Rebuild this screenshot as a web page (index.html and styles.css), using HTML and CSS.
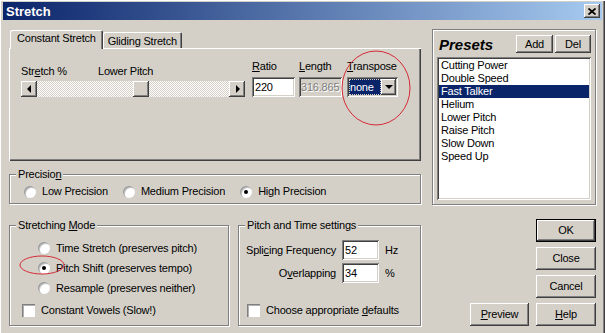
FILE: index.html
```html
<!DOCTYPE html>
<html lang="en">
<head>
  <meta charset="UTF-8" />
  <title>Stretch</title>
  <link rel="stylesheet" href="styles.css">
</head>
<body>

  <div class="window">
    <div class="titlebar">
      <span>Stretch</span>
      <div class="close-btn">
        <svg width="8" height="7" viewBox="0 0 8 7"><path d="M0.5 0.5l7 6M7.5 0.5l-7 6" stroke="#000" stroke-width="1.7" fill="none"/></svg>
      </div>
    </div>

    <div class="main">
      <div class="left">
        <div class="tabs">
          <div class="tab active">Constant Stretch</div>
          <div class="tab">Gliding Stretch</div>
        </div>

        <div class="tab-panel">
          <div class="stretch-row">
            <div class="slider-col">
              <div class="slider-labels">
                <span class="lbl-stretch">Str<u>e</u>tch %</span>
                <span>Lower Pitch</span>
              </div>
              <div class="scrollbar">
                <div class="sb-btn"><i class="arrow-left"></i></div>
                <div class="sb-track"><div class="sb-thumb"></div></div>
                <div class="sb-btn"><i class="arrow-right"></i></div>
              </div>
            </div>

            <div class="field ratio">
              <label><u>R</u>atio</label>
              <div class="textbox">220</div>
            </div>
            <div class="field length">
              <label><u>L</u>ength</label>
              <div class="textbox disabled">316.865</div>
            </div>
            <div class="field transpose">
              <label><u>T</u>ranspose</label>
              <div class="combo">
                <span class="combo-value">none</span>
                <div class="combo-btn"><i class="arrow-down"></i></div>
              </div>
            </div>
          </div>
        </div>

        <div class="group precision">
          <div class="legend"><span>Precisio<u>n</u></span></div>
          <div class="radio-row">
            <div class="option"><i class="radio"></i><span>Low Precision</span></div>
            <div class="option"><i class="radio"></i><span>Medium Precision</span></div>
            <div class="option"><i class="radio on"></i><span>High Precision</span></div>
          </div>
        </div>

        <div class="bottom-row">
          <div class="group mode">
            <div class="legend"><span>Stretching <u>M</u>ode</span></div>
            <div class="mode-list">
              <div class="option"><i class="radio"></i><span>Time Stretch (preserves pitch)</span></div>
              <div class="option"><i class="radio on"></i><span>Pitch Shift (preserves tempo)</span></div>
              <div class="option"><i class="radio"></i><span>Resample (preserves neither)</span></div>
            </div>
            <div class="option check-row"><i class="checkbox"></i><span>Constant Vowels (Slow!)</span></div>
          </div>

          <div class="group pitch-time">
            <div class="legend"><span>Pitch and Time settings</span></div>
            <div class="settings-grid">
              <span class="set-label">Spli<u>c</u>ing Frequency</span>
              <div class="textbox">52</div>
              <span>Hz</span>
              <span class="set-label">O<u>v</u>erlapping</span>
              <div class="textbox">34</div>
              <span>%</span>
            </div>
            <div class="option check-row"><i class="checkbox"></i><span>Choose appropriate <u>d</u>efaults</span></div>
          </div>
        </div>
      </div>

      <div class="right">
        <div class="presets">
          <div class="presets-head">
            <span class="presets-title">Presets</span>
            <div class="btn small add">Add</div>
            <div class="btn small del">Del</div>
          </div>
          <div class="listbox">
            <div class="item">Cutting Power</div>
            <div class="item">Double Speed</div>
            <div class="item selected">Fast Talker</div>
            <div class="item">Helium</div>
            <div class="item">Lower Pitch</div>
            <div class="item">Raise Pitch</div>
            <div class="item">Slow Down</div>
            <div class="item">Speed Up</div>
          </div>
        </div>

        <div class="actions">
          <div class="btn default">OK</div>
          <div class="btn">Close</div>
          <div class="btn">Cancel</div>
          <div class="last-row">
            <div class="btn"><span><u>P</u>review</span></div>
            <div class="btn"><span><u>H</u>elp</span></div>
          </div>
        </div>
      </div>
    </div>

    <!-- red marks drawn over the dialog -->
    <svg class="marks" width="605" height="333">
      <ellipse cx="376" cy="88" rx="34" ry="37" />
      <ellipse cx="42" cy="265" rx="22" ry="9" />
    </svg>
  </div>

</body>
</html>
```

FILE: styles.css
```css
* {
  box-sizing: border-box;
}

body {
  margin: 0;
  background: #d4d0c8;
  font-family: 'Liberation Sans', Arial, sans-serif;
  font-size: 11px;
  letter-spacing: -0.2px;
  line-height: 13px;
  color: #000;
}

u {
  text-decoration-thickness: 1px;
  text-underline-offset: 1px;
}

.window {
  position: relative;
  width: 605px;
  height: 333px;
  overflow: hidden;
  padding: 2px 3px 0 3px;
  background: #d4d0c8;
  box-shadow: inset 1px 1px #fff, inset -1px 0 #404040, inset -2px 0 #808080;
}

.titlebar {
  height: 18px;
  display: flex;
  align-items: center;
  justify-content: space-between;
  padding: 0 2px 0 3px;
  background: linear-gradient(to right, #0a246a, #a6caf0);
  color: #fff;
  font-weight: bold;
  font-size: 13px;
  letter-spacing: 0;
}

.close-btn {
  width: 16px;
  height: 14px;
  display: flex;
  align-items: center;
  justify-content: center;
  background: #d4d0c8;
  box-shadow: inset -1px -1px #404040, inset 1px 1px #fff, inset -2px -2px #808080;
}

.main {
  display: flex;
  padding-left: 6px;
}

.left {
  width: 412px;
  margin-top: 10px;
}

/* tabs */

.tabs {
  display: flex;
  align-items: flex-end;
  height: 18px;
  padding-left: 1px;
}

.tab {
  height: 16px;
  padding: 3px 5px 0 5px;
  border-radius: 2px 2px 0 0;
  box-shadow: inset 1px 1px #fff, inset -1px 0 #404040, inset -2px 0 #808080;
}

.tab.active {
  position: relative;
  z-index: 1;
  height: 19px;
  margin-bottom: -1px;
  padding: 2px 7px 0 7px;
  background: #d4d0c8;
}

.tab-panel {
  height: 113px;
  box-shadow: inset 1px 1px #fff, inset -1px -1px #404040, inset -2px -2px #808080;
}

.stretch-row {
  display: flex;
  align-items: flex-end;
  padding: 12px 0 0 12px;
}

.slider-labels {
  display: flex;
  margin-bottom: 3px;
}

.lbl-stretch {
  width: 77px;
}

.scrollbar {
  display: flex;
  width: 224px;
  height: 16px;
}

.sb-btn, .sb-thumb, .combo-btn, .btn {
  background: #d4d0c8;
  box-shadow: inset -1px -1px #404040, inset 1px 1px #fff, inset -2px -2px #808080;
}

.sb-btn {
  width: 16px;
  height: 16px;
  display: flex;
  align-items: center;
  justify-content: center;
}

.sb-track {
  flex: 1;
  display: flex;
  background: repeating-conic-gradient(#fff 0 25%, #d4d0c8 0 50%) 0 0 / 2px 2px;
}

.sb-thumb {
  width: 16px;
  height: 16px;
  margin-left: 96px;
}

.arrow-left, .arrow-right, .arrow-down {
  width: 0;
  height: 0;
  border-style: solid;
  border-color: transparent;
}

.arrow-left {
  border-width: 4px 4px 4px 0;
  border-right-color: #000;
}

.arrow-right {
  border-width: 4px 0 4px 4px;
  border-left-color: #000;
  margin-left: 1px;
}

.arrow-down {
  border-width: 4px 4px 0 4px;
  border-top-color: #000;
}

.field {
  display: flex;
  flex-direction: column;
}

.field label {
  margin-bottom: 4px;
}

.ratio {
  width: 43px;
  margin-left: 7px;
}

.length {
  width: 43px;
  margin-left: 4px;
}

.transpose {
  width: 51px;
  margin-left: 5px;
}

.textbox, .combo {
  height: 20px;
  background: #fff;
  box-shadow: inset 1px 1px #808080, inset -1px -1px #fff, inset 2px 2px #404040, inset -2px -2px #d4d0c8;
}

.textbox {
  padding: 0 3px;
  line-height: 20px;
  white-space: nowrap;
  overflow: hidden;
}

.textbox.disabled {
  background: #d4d0c8;
  color: #808080;
  text-shadow: 1px 1px #fff;
  padding-left: 2px;
}

.combo {
  display: flex;
  padding: 2px;
}

.combo-value {
  flex: 1;
  padding-left: 1px;
  line-height: 16px;
  background: #0a246a;
  color: #fff;
  outline: 1px dotted #d4d0c8;
  outline-offset: -1px;
}

.combo-btn {
  width: 15px;
  display: flex;
  align-items: center;
  justify-content: center;
}

/* group boxes */

.group {
  border: 1px solid #808080;
  box-shadow: inset 1px 1px #fff, 1px 1px #fff;
}

.legend {
  margin: -7px 0 0 6px;
}

.legend span {
  background: #d4d0c8;
  padding: 0 2px;
}

.precision {
  height: 30px;
  margin-top: 13px;
}

.option {
  display: flex;
  align-items: center;
  gap: 6px;
  white-space: nowrap;
}

.radio {
  width: 12px;
  height: 12px;
  border-radius: 50%;
  background: #fff;
  box-shadow: inset 1px 1px #9a9a9a, inset 2px 2px #c8c8c8;
  display: flex;
  align-items: center;
  justify-content: center;
}

.radio.on::after {
  content: "";
  width: 4px;
  height: 4px;
  border-radius: 50%;
  background: #000;
}

.checkbox {
  width: 13px;
  height: 13px;
  background: #fff;
  box-shadow: inset 1px 1px #808080, inset 2px 2px #b0b0b0, inset -1px -1px #fff;
}

.radio-row {
  display: flex;
  gap: 15px;
  padding-left: 14px;
  margin-top: 4px;
}

.bottom-row {
  display: flex;
  gap: 9px;
  margin-top: 21px;
}

.mode {
  width: 220px;
  height: 101px;
}

.mode-list {
  padding-left: 28px;
  margin-top: 6px;
}

.mode-list .option {
  height: 20px;
}

.mode .check-row {
  margin: 6px 0 0 12px;
}

.pitch-time {
  flex: 1;
  height: 101px;
}

.settings-grid {
  display: grid;
  grid-template-columns: 90px 37px auto;
  column-gap: 6px;
  row-gap: 3px;
  align-items: center;
  padding-left: 7px;
  margin-top: 8px;
}

.set-label {
  text-align: right;
}

.pitch-time .check-row {
  margin: 21px 0 0 8px;
}

/* right column */

.right {
  width: 164px;
  margin: 9px 0 0 11px;
}

.presets {
  height: 176px;
  padding: 5px 4px 0 4px;
  border: 1px solid #808080;
  box-shadow: inset 1px 1px #fff, 1px 1px #fff;
}

.presets-head {
  display: flex;
  align-items: center;
  gap: 2px;
}

.presets-title {
  flex: 1;
  padding-left: 2px;
  font-size: 15px;
  font-weight: bold;
  font-style: italic;
  letter-spacing: 0;
}

.btn {
  display: flex;
  align-items: center;
  justify-content: center;
  width: 60px;
  height: 23px;
}

.btn.small {
  height: 18px;
}

.btn.add {
  width: 37px;
}

.btn.del {
  width: 36px;
}

.listbox {
  height: 143px;
  margin-top: 4px;
  padding: 2px;
  background: #fff;
  box-shadow: inset 1px 1px #808080, inset -1px -1px #fff, inset 2px 2px #404040, inset -2px -2px #d4d0c8;
}

.item {
  height: 13px;
  padding-left: 2px;
}

.item.selected {
  background: #0a246a;
  color: #fff;
}

.actions {
  display: flex;
  flex-direction: column;
  align-items: flex-end;
  gap: 5px;
  margin-top: 14px;
}

.btn.default {
  box-shadow: inset 0 0 0 1px #000, inset -2px -2px #404040, inset 2px 2px #fff, inset -3px -3px #808080;
}

.last-row {
  display: flex;
  gap: 7px;
}

.last-row .btn:first-child {
  width: 59px;
}

.marks {
  position: absolute;
  left: 0;
  top: 0;
  pointer-events: none;
}

.marks ellipse {
  fill: none;
  stroke: #d42a35;
  stroke-width: 1;
}
```
